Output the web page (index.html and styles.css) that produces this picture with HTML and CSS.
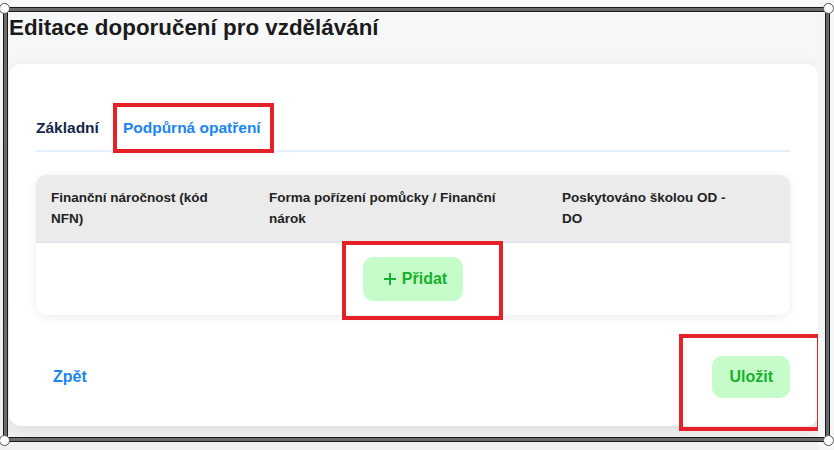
FILE: index.html
```html
<!DOCTYPE html>
<html lang="cs">
<head>
    <meta charset="UTF-8">
    <meta name="viewport" content="width=device-width, initial-scale=1.0">
    <title>Editace doporučení pro vzdělávání</title>
    <link rel="stylesheet" href="styles.css">
</head>
<body>
    <div class="page">
        <h1 class="title">Editace doporučení pro vzdělávání</h1>

        <div class="card">
            <div class="tabs">
                <span class="tab">Základní</span>
                <span class="tab active">Podpůrná opatření<span class="mark mark-tab"></span></span>
            </div>

            <div class="table">
                <div class="table-head">
                    <div class="th">Finanční náročnost (kód NFN)</div>
                    <div class="th">Forma pořízení pomůcky / Finanční nárok</div>
                    <div class="th">Poskytováno školou OD - DO</div>
                </div>
                <div class="table-body">
                    <button type="button" class="btn btn-add">
                        <svg class="plus" width="12" height="12" viewBox="0 0 12 12">
                            <path d="M6 0V12M0 6H12" stroke="currentColor" stroke-width="2" fill="none"/>
                        </svg>
                        Přidat
                        <span class="mark mark-add"></span>
                    </button>
                </div>
            </div>

            <div class="footer">
                <a class="back" href="#">Zpět</a>
                <button type="button" class="btn btn-save">Uložit<span class="mark mark-save"></span></button>
            </div>
        </div>
    </div>

    <!-- selection frame drawn over the screenshot -->
    <div class="frame">
        <span class="handle tl"></span>
        <span class="handle tr"></span>
        <span class="handle bl"></span>
        <span class="handle br"></span>
    </div>
</body>
</html>
```

FILE: styles.css
```css
body {
    margin: 0;
    padding: 0;
    font-family: "Liberation Sans", Arial, sans-serif;
    background-color: #f5f6f8;
    color: #222;
}
.page {
    width: 809px;
    height: 450px;
    padding-left: 9px;
    background: linear-gradient(#f7f8fa, #eef0f2);
    overflow: hidden;
}
.title {
    margin: 0;
    padding-top: 14px;
    font-size: 22.4px;
    line-height: 28px;
    font-weight: bold;
    color: #1b1b1b;
}
.card {
    margin-top: 22px;
    padding: 54px 28px 28px 27px;
    background-color: #fff;
    border-radius: 12px;
    box-shadow: 0 4px 18px rgba(0, 0, 0, 0.08);
}
.tabs {
    display: flex;
    gap: 24px;
    padding-bottom: 12px;
    border-bottom: 2px solid #e4f0fb;
}
.tab {
    position: relative;
    font-size: 15.5px;
    line-height: 20px;
    font-weight: bold;
    color: #14284a;
}
.tab.active {
    color: #1a85f2;
}
.table {
    margin-top: 23px;
    border-radius: 10px;
    background-color: #fff;
    box-shadow: 0 2px 10px rgba(0, 0, 0, 0.08);
}
.table-head {
    display: grid;
    grid-template-columns: 218px 293px 1fr;
    background-color: #ebebeb;
    border-radius: 10px 10px 0 0;
    border-bottom: 1px solid #dde0ea;
}
.th {
    padding: 12px 40px 13px 15px;
    font-size: 13.5px;
    line-height: 21px;
    font-weight: bold;
    color: #222;
}
.th:last-child {
    padding-right: 45px;
}
.table-body {
    display: flex;
    justify-content: center;
    padding: 14px 0;
}
.btn {
    position: relative;
    display: inline-flex;
    align-items: center;
    border: none;
    border-radius: 10px;
    background-color: #c5fcc9;
    color: #16b12a;
    font-family: inherit;
    font-size: 16px;
    font-weight: bold;
    cursor: pointer;
}
.btn-add {
    height: 44px;
    padding: 0 16px 0 21px;
    gap: 6px;
}
.btn-save {
    height: 42px;
    padding: 0 17px;
}
.footer {
    display: flex;
    justify-content: space-between;
    align-items: center;
    margin-top: 41px;
}
.back {
    padding-left: 17px;
    font-size: 16px;
    font-weight: bold;
    color: #1a85f2;
    text-decoration: none;
}

/* red annotation boxes */
.mark {
    position: absolute;
    box-sizing: border-box;
    border: 4px solid #e42127;
    pointer-events: none;
}
.mark-tab {
    left: -10px;
    top: -15px;
    width: 161px;
    height: 50px;
}
.mark-add {
    left: -21px;
    top: -16px;
    width: 161px;
    height: 79px;
}
.mark-save {
    left: -33px;
    top: -22px;
    width: 142px;
    height: 97px;
}

.frame {
    position: absolute;
    left: 4px;
    top: 8px;
    width: 819px;
    height: 427px;
    border: 3px solid #6a6a6a;
    box-shadow: 0 0 0 1px #1a1a1a, inset 0 0 0 1px #1a1a1a;
}
.handle {
    position: absolute;
    width: 9px;
    height: 9px;
    border: 1.5px solid #555;
    border-radius: 50%;
    background-color: #fff;
}
.handle.tl { left: -8px; top: -8px; }
.handle.tr { right: -8px; top: -8px; }
.handle.bl { left: -8px; bottom: -8px; }
.handle.br { right: -8px; bottom: -8px; }
```
